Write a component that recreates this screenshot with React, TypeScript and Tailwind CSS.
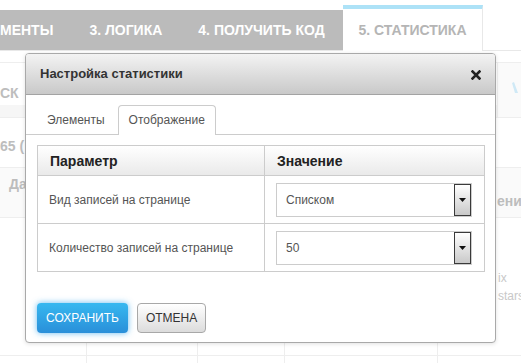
import React from 'react';

const navTabs = ['МЕНТЫ', '3. ЛОГИКА', '4. ПОЛУЧИТЬ КОД'];

function Select({ value }: { value: string }) {
  return (
    <div className="relative flex h-[34px] w-[196px] items-center border border-[#cccccc] bg-white pl-[9px] text-[12px] text-[#555]">
      {value}
      <div className="absolute right-0 top-0 flex h-[32px] w-[17px] items-center justify-center border border-[#3a3a3a] bg-gradient-to-b from-white to-[#c9c9c9]">
        <svg width="7" height="4" viewBox="0 0 7 4">
          <path d="M0 0h7L3.5 4z" fill="#111" />
        </svg>
      </div>
    </div>
  );
}

function Modal() {
  return (
    <div className="absolute left-[25px] top-[53px] flex h-[290px] w-[471px] flex-col overflow-hidden rounded-[4px] border border-[#a9a9a9] bg-white shadow-[0_1px_4px_rgba(0,0,0,0.12)]">
      <div className="flex h-[41px] shrink-0 items-center justify-between border-b border-[#a3a3a3] bg-gradient-to-b from-[#f3f3f3] to-[#c9c9c9] pl-[14px] pr-[14px]">
        <span className="text-[13px] font-bold text-[#333]">Настройка статистики</span>
        <svg width="10" height="10" viewBox="0 0 10 10" className="mt-[1px]">
          <path d="M1.5 1.5l7 7M8.5 1.5l-7 7" stroke="#222" strokeWidth="2.6" strokeLinecap="square" />
        </svg>
      </div>

      <div className="mt-[10px] flex h-[30px] items-end border-b border-[#cccccc] pl-[11px] text-[12px] text-[#555]">
        <div className="flex h-[29px] items-center px-[10px]">Элементы</div>
        <div className="-mb-px ml-[3px] flex h-[30px] items-center rounded-t-[4px] border border-b-0 border-[#cccccc] bg-white px-[10px] pb-px">
          Отображение
        </div>
      </div>

      <div className="mx-[11px] mt-[10px]">
        <table className="w-[448px] border-collapse text-left">
          <thead>
            <tr className="h-[30px] bg-gradient-to-b from-white to-[#e9e9e9]">
              <th className="w-[227px] border border-[#cccccc] py-0 pl-[12px] text-[14px] font-bold leading-[16px] text-[#222]">Параметр</th>
              <th className="border border-[#cccccc] py-0 pl-[12px] text-[14px] font-bold leading-[16px] text-[#222]">Значение</th>
            </tr>
          </thead>
          <tbody className="text-[12px] text-[#555]">
            <tr className="h-[48px]">
              <td className="border border-[#cccccc] pl-[11px]">Вид записей на странице</td>
              <td className="border border-[#cccccc] px-[11px]">
                <Select value="Списком" />
              </td>
            </tr>
            <tr className="h-[48px]">
              <td className="border border-[#cccccc] pl-[11px]">Количество записей на странице</td>
              <td className="border border-[#cccccc] px-[11px]">
                <Select value="50" />
              </td>
            </tr>
          </tbody>
        </table>
      </div>

      <div className="mx-[11px] mt-[31px] flex gap-[9px]">
        <button className="h-[30px] rounded-[4px] bg-gradient-to-b from-[#37b8f0] to-[#2a8fd9] px-[9px] text-[12px] text-white shadow-[0_0_6px_rgba(40,160,235,0.7)]">
          СОХРАНИТЬ
        </button>
        <button className="h-[30px] rounded-[4px] border border-[#a8a8a8] bg-gradient-to-b from-white to-[#dcdcdc] px-[8px] text-[12px] text-[#333]">
          ОТМЕНА
        </button>
      </div>
    </div>
  );
}

export default function App() {
  return (
    <div className="relative h-[363px] w-[521px] overflow-hidden bg-white font-['Liberation_Sans',Arial,sans-serif]">
      <div className="flex h-[51px] items-end border-b border-[#e8e8e8]">
        <div className="flex h-[40px] w-[343px] items-center whitespace-nowrap bg-[#bbbbbb] text-[14px] font-bold text-white">
          {navTabs.map((t, i) => (
            <span key={t} className={i === 0 ? 'pr-[18px]' : 'px-[18px]'}>
              {t}
            </span>
          ))}
        </div>
        <div className="-mb-px flex h-[46px] w-[140px] items-center justify-center border-r border-t-4 border-r-[#e8e8e8] border-t-[#ade2f7] bg-white text-[14px] font-bold text-[#b5b5b5]">
          5. СТАТИСТИКА
        </div>
      </div>

      <div className="h-[12px] border-b border-[#eeeeee]" />

      <div className="flex h-[55px] border-b border-[#eeeeee]">
        <div className="flex flex-1 flex-col">
          <div className="h-[42px] pt-[22px] text-[14px] font-bold leading-[16px] text-[#bdbdbd]">СК</div>
          <div className="flex-1 bg-[#f6f6f6]" />
        </div>
        <div className="w-[24px] border-l border-[#eeeeee] bg-[#fafafa] pl-[14px] pt-[19px]">
          <svg width="10" height="12" viewBox="0 0 10 12">
            <path d="M0 1l3 10h3L2 0z" fill="#cfe9f6" />
          </svg>
        </div>
      </div>

      <div className="h-[50px] border-b border-[#eeeeee] pt-[20px] text-[14px] font-bold leading-[16px] text-[#bdbdbd]">
        65 (
      </div>

      <div className="flex h-[50px] justify-between border-b border-[#eeeeee] bg-[#fafafa] text-[14px] font-bold leading-[16px] text-[#bdbdbd]">
        <span className="pl-[9px] pt-[8px]">Дата</span>
        <span className="w-[24px] overflow-hidden whitespace-nowrap pt-[25px]">ени</span>
      </div>

      <div className="grid h-[138px] grid-cols-[86px_111px_87px_153px_1fr] border-b border-[#eeeeee] text-[12px] leading-[18px] text-[#c8c8c8]">
        <div className="pl-[26px] pt-[51px]">
          <div>26.</div>
          <div>15:</div>
        </div>
        <div className="border-l border-[#eeeeee]" />
        <div className="border-l border-[#eeeeee]" />
        <div className="border-l border-[#eeeeee]" />
        <div className="border-l border-[#eeeeee] pl-[60px] pt-[51px]">
          <div>ix</div>
          <div>stars</div>
        </div>
      </div>
      <div className="grid h-[20px] grid-cols-[86px_111px_87px_153px_1fr]">
        <div />
        <div className="border-l border-[#eeeeee]" />
        <div className="border-l border-[#eeeeee]" />
        <div className="border-l border-[#eeeeee]" />
        <div className="border-l border-[#eeeeee]" />
      </div>

      <Modal />
    </div>
  );
}
